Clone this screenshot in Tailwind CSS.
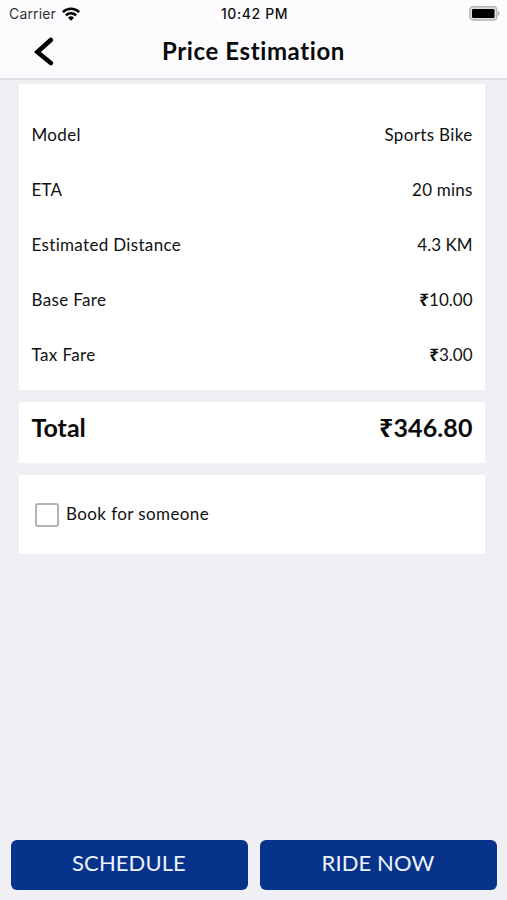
<!DOCTYPE html>
<html lang="en">
<head>
<meta charset="utf-8">
<title>Price Estimation</title>
<script src="https://cdn.jsdelivr.net/npm/@tailwindcss/browser@4"></script>
</head>
<body class="flex h-[900px] w-[507px] flex-col overflow-hidden bg-[#efeff4] font-['Lato','Noto_Sans',sans-serif] text-[#111]">
<header class="h-[80px] shrink-0 border-b-2 border-[#dfdfe3] bg-[#fcfcfe]">
  <div class="grid h-[27px] grid-cols-[1fr_80px_1fr] items-center pl-[9px] pr-[7px] font-['Inter',sans-serif] text-[14px]">
    <div class="flex items-center gap-[6px] text-[#333]">
      <span class="tracking-[0.15px]">Carrier</span>
      <svg class="h-[14px] w-[18px]" viewBox="0 0 18 14" fill="none" stroke="#000" stroke-width="2.5"><path d="M.9 5.2a11.5 11.5 0 0 1 16.2 0M3.9 8.4a7.2 7.2 0 0 1 10.2 0"/><path d="M9 13.8 6 10.7a4.3 4.3 0 0 1 6 0z" fill="#000" stroke="none"/></svg>
    </div>
    <span class="whitespace-nowrap text-center font-medium tracking-[0.6px]">10:42 PM</span>
    <svg class="h-[15px] w-[31px] justify-self-end" viewBox="0 0 31 15"><rect x=".8" y=".8" width="27" height="13.2" rx="3.2" fill="#e0e0e0" stroke="#b4b4b4" stroke-width="1.4"/><rect x="3" y="3" width="22.5" height="9" rx="1.2"/><path d="M29 5q3 2.5 0 5z" fill="#aaa"/></svg>
  </div>
  <div class="grid h-[50px] grid-cols-[60px_1fr_60px] items-center">
    <svg class="ml-[32px] h-[30px] w-[22px]" viewBox="0 0 22 30" fill="none" stroke="#000" stroke-width="4.6" stroke-linecap="round" stroke-linejoin="miter"><path d="M18.8 3 5.4 15l13.4 11"/></svg>
    <h1 class="pb-[2px] text-center text-[24px] font-bold tracking-[0.6px] text-[#0a0a0a]">Price Estimation</h1>
  </div>
</header>
<main class="flex flex-1 flex-col gap-[12px] pl-[19px] pr-[22px] pt-[4px] text-[17px]">
  <section class="h-[306px] bg-white px-[12.5px] pt-[23px]">
    <div class="flex h-[55px] items-center justify-between tracking-[0.35px]"><span>Model</span><span>Sports Bike</span></div>
    <div class="flex h-[55px] items-center justify-between tracking-[0.2px]"><span>ETA</span><span>20 mins</span></div>
    <div class="flex h-[55px] items-center justify-between"><span class="tracking-[0.33px]">Estimated Distance</span><span>4.3 KM</span></div>
    <div class="flex h-[55px] items-center justify-between"><span class="tracking-[0.35px]">Base Fare</span><span><b class="font-['Noto_Sans']">₹</b>10.00</span></div>
    <div class="flex h-[55px] items-center justify-between"><span class="tracking-[0.4px]">Tax Fare</span><span><b class="font-['Noto_Sans']">₹</b>3.00</span></div>
  </section>
  <section class="flex h-[61px] items-center justify-between rounded-[1px] bg-white px-[12.5px] pb-[10px] text-[25px] font-bold text-[#0a0a0a]"><span>Total</span><span class="tracking-[0.1px]"><span class="font-['Noto_Sans']">₹</span>346.80</span></section>
  <section class="flex h-[79px] items-center gap-[7px] rounded-[2px] bg-white pl-[16px]">
    <span class="h-[24px] w-[24px] rounded-[3px] border-2 border-[#b4b4b4]"></span>
    <span class="pb-[2px] tracking-[0.4px]">Book for someone</span>
  </section>
</main>
<footer class="flex h-[60px] shrink-0 gap-[12px] px-[10.5px] pb-[10px] text-[22px] tracking-[0.1px] text-[#eef4ff]">
  <button class="flex-1 rounded-[6px] bg-[#08338a] pb-[5px]">SCHEDULE</button>
  <button class="flex-1 rounded-[6px] bg-[#08338a] pb-[5px]">RIDE NOW</button>
</footer>
</body>
</html>
